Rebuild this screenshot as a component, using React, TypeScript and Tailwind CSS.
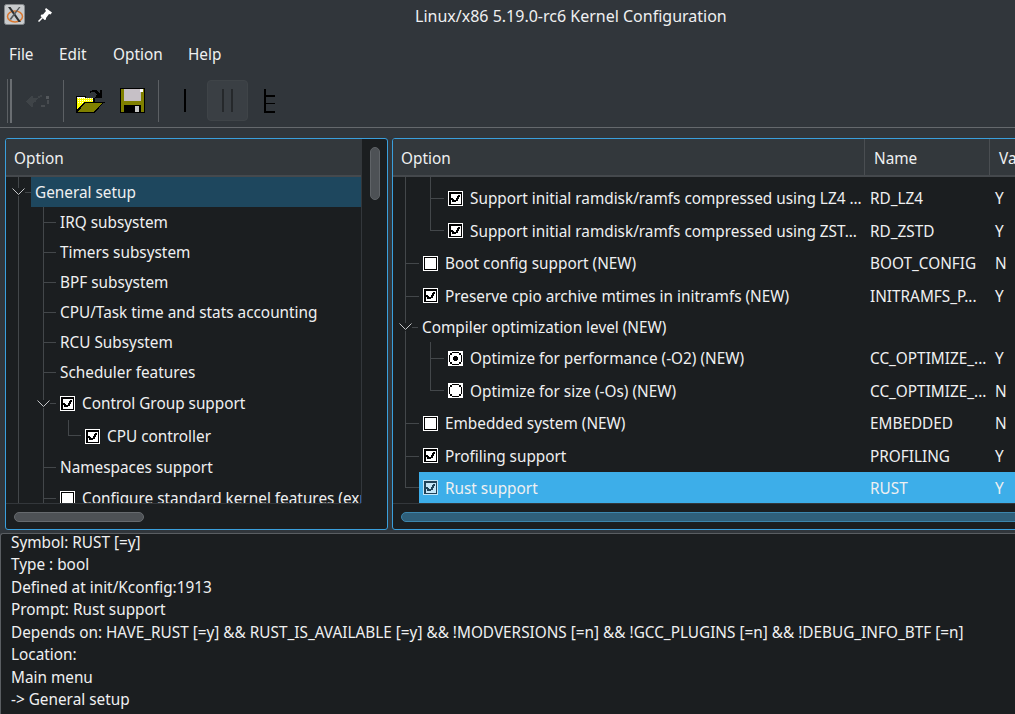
import React from "react";

type G = "v" | "t" | "l" | "c" | "n";

function Chevron() {
  return (
    <svg width="13" height="8" viewBox="0 0 13 8" className="block">
      <path d="M0.5 0.5 L6.5 6.5 L12.5 0.5" fill="none" stroke="#c4c6c8" strokeWidth="1" />
    </svg>
  );
}

function Guide({ g, wide }: { g: G; wide?: boolean }) {
  const w = wide ? "w-[26px]" : "w-[25px]";
  if (g === "n") return <div className={`${w} flex-none`} />;
  if (g === "v")
    return (
      <div className={`${w} flex-none pl-[12px]`}>
        <div className="h-full w-px bg-[#43474a]" />
      </div>
    );
  if (g === "l")
    return (
      <div className={`${w} flex-none pl-[12px]`}>
        <div className="h-1/2 border-b border-l border-[#43474a]" />
      </div>
    );
  return (
    <div className={`${w} flex-none pl-[12px] relative`}>
      <div className="h-full border-l border-[#43474a] flex items-center">
        <div className="h-px w-full bg-[#43474a]" />
      </div>
      {g === "c" && (
        <div className="absolute left-[6px] top-1/2 -translate-y-1/2 bg-[#1b1e20] h-[8px] flex">
          <Chevron />
        </div>
      )}
    </div>
  );
}

function Check({ on, sel }: { on: boolean; sel?: boolean }) {
  const bg = sel ? "#c4e6f8" : "#ffffff";
  const ink = sel ? "#1f4258" : "#000000";
  return (
    <svg width="15" height="15" viewBox="0 0 15 15" className="flex-none block" shapeRendering="crispEdges">
      <rect width="15" height="15" fill={bg} />
      <rect x="1" y="1" width="13" height="13" fill={ink} />
      <rect x="2" y="2" width="11" height="11" fill={bg} />
      {on && (
        <g fill={ink}>
          <rect x="1" y="1" width="13" height="2" />
          <rect x="1" y="1" width="2" height="13" />
          <rect x="3" y="7" width="2" height="1" />
          <rect x="3" y="8" width="3" height="1" />
          <rect x="4" y="9" width="6" height="1" />
          <rect x="4" y="10" width="4" height="1" />
          <rect x="8" y="7" width="2" height="2" />
          <rect x="9" y="5" width="2" height="3" />
          <rect x="10" y="4" width="2" height="2" />
        </g>
      )}
    </svg>
  );
}

function Radio({ on }: { on: boolean }) {
  return (
    <svg width="15" height="15" viewBox="0 0 15 15" className="flex-none block" shapeRendering="crispEdges">
      <rect width="15" height="15" fill="#ffffff" />
      <g fill="#000000">
        <rect x="4" y="1" width="7" height="1" />
        <rect x="4" y="13" width="7" height="1" />
        <rect x="1" y="4" width="1" height="7" />
        <rect x="13" y="4" width="1" height="7" />
        <rect x="2" y="2" width="2" height="2" />
        <rect x="11" y="2" width="2" height="2" />
        <rect x="2" y="11" width="2" height="2" />
        <rect x="11" y="11" width="2" height="2" />
        {on && <rect x="6" y="5" width="3" height="5" />}
        {on && <rect x="5" y="6" width="5" height="3" />}
      </g>
    </svg>
  );
}

type Mark = "on" | "off" | "r1" | "r0" | undefined;

function MarkIcon({ m, sel }: { m: Mark; sel?: boolean }) {
  if (!m) return null;
  if (m === "on") return <Check on sel={sel} />;
  if (m === "off") return <Check on={false} />;
  return <Radio on={m === "r1"} />;
}

function LeftRow({
  guides,
  label,
  mark,
  h,
  sel,
}: {
  guides: G[];
  label: string;
  mark?: Mark;
  h: string;
  sel?: boolean;
}) {
  return (
    <div className={`flex flex-none ${h}`}>
      {guides.map((g, i) => (
        <Guide key={i} g={g} />
      ))}
      <div className={`flex flex-1 items-center whitespace-nowrap min-w-0 overflow-hidden pl-[4px] ${sel ? "bg-[#1e475e]" : ""}`}>
        {mark && (
          <div className="mr-[7px]">
            <MarkIcon m={mark} />
          </div>
        )}
        <span>{label}</span>
      </div>
    </div>
  );
}

function RightRow({
  guides,
  label,
  name,
  val,
  mark,
  h,
  sel,
}: {
  guides: G[];
  label: string;
  name?: string;
  val?: string;
  mark?: Mark;
  h: string;
  sel?: boolean;
}) {
  return (
    <div className={`flex flex-none ${h}`}>
      {guides.map((g, i) => (
        <Guide key={i} g={g} wide={i === guides.length - 1 && g !== "c"} />
      ))}
      <div className={`flex flex-1 items-center whitespace-nowrap min-w-0 ${sel ? "bg-[#3daee9] pt-[1px]" : ""}`}>
        <div className="flex flex-1 min-w-0 items-center pl-[4px]">
          {mark && (
            <div className="mr-[7px]">
              <MarkIcon m={mark} sel={sel} />
            </div>
          )}
          <span>{label}</span>
        </div>
        <div className="w-[125px] flex-none pl-[5px]">{name}</div>
        <div className="w-[56px] flex-none pl-[5px]">{val}</div>
      </div>
    </div>
  );
}

function Thumb({ className }: { className: string }) {
  return <div className={`rounded-full border ${className}`} />;
}

function Logo() {
  return (
    <svg width="21" height="21" viewBox="0 0 21 21" className="block flex-none">
      <rect x="0.5" y="0.5" width="20" height="20" rx="2" fill="#c8cbcd" stroke="#85898c" />
      <ellipse cx="11" cy="12.5" rx="7.5" ry="5.5" fill="none" stroke="#d9772f" strokeWidth="1.5" />
      <path d="M4 3 L6.5 3 L17 18 L14.5 18 Z" fill="#2e3133" />
      <path d="M15 3 L16.5 3 L7 16 L5.5 15 Z" fill="#55595c" />
    </svg>
  );
}

function Pin() {
  return (
    <svg width="14" height="14" viewBox="0 0 14 14" className="block flex-none">
      <path d="M8 0 L14 4.5 L12.5 6.5 L11 6 L8 10 L8 11.5 L6.5 12 L2.5 8 L3.5 6.5 L5 6.5 L8 3 L7 1.5 Z" fill="#ffffff" />
      <path d="M0.5 13.5 L4.5 9.5" stroke="#ffffff" strokeWidth="1.5" />
    </svg>
  );
}

function BackIcon() {
  return (
    <svg width="24" height="16" viewBox="0 0 24 16" className="block" shapeRendering="crispEdges">
      <path d="M0 8 L6 3 L7 3 L7 5 L12 5 L12 3 L16 2 L16 4 L12 5 L10 8 L9 9 L7 10 L7 14 L5 14 Z" fill="#3f4448" />
      <rect x="20" y="3" width="3" height="3" fill="#54585c" />
      <rect x="21" y="7" width="2" height="4" fill="#484c50" />
      <rect x="15" y="12" width="4" height="2" fill="#484c50" />
    </svg>
  );
}

function OpenIcon() {
  return (
    <svg width="29" height="25" viewBox="0 0 29 25" className="block" shapeRendering="crispEdges">
      <defs>
        <pattern id="dither" width="2" height="2" patternUnits="userSpaceOnUse">
          <rect width="2" height="2" fill="#ffff00" />
          <rect width="1" height="1" fill="#ffffff" />
        </pattern>
      </defs>
      <path d="M14 3 H16 V2 H21 V3 H22 V4 H23 V5 H24 V2 H26 V10 H19 V9 H20 V7 H21 V6 H20 V5 H19 V4 H15 V5 H14 Z" fill="#000" />
      <rect x="0" y="8" width="10" height="17" fill="#000" />
      <rect x="8" y="10" width="11" height="4" fill="#000" />
      <rect x="1" y="10" width="16" height="5" fill="url(#dither)" />
      <rect x="1" y="15" width="9" height="8" fill="#ffff00" />
      <rect x="1" y="9" width="8" height="1" fill="#fff" />
      <path d="M8 14 H29 V15 H27 L19 25 H0 V23 Z" fill="#000" />
      <path d="M9 15 H26 L18 24 H2 Z" fill="#808000" />
    </svg>
  );
}

function SaveIcon() {
  return (
    <svg width="25" height="25" viewBox="0 0 25 25" className="block" shapeRendering="crispEdges">
      <rect width="25" height="25" fill="#000" />
      <rect x="1" y="1" width="23" height="23" fill="#808000" />
      <rect x="4" y="1" width="17" height="12" fill="#c6c0c6" />
      <rect x="20" y="1" width="3" height="3" fill="#ffffff" />
      <rect x="4" y="17" width="17" height="8" fill="#000" />
      <rect x="15" y="18" width="4" height="6" fill="#c6c6c6" />
    </svg>
  );
}

function Separator() {
  return <div className="w-px h-[42px] bg-[#5c6064] flex-none" />;
}

function SingleIcon() {
  return <div className="w-[2px] h-[23px] bg-black flex-none" />;
}

function SplitIcon() {
  return (
    <div className="w-[41px] h-[41px] rounded-[4px] bg-[#3a3f44] border border-[#3f4448] flex items-center justify-center gap-[7px] flex-none">
      <div className="w-[2px] h-[23px] bg-[#25282b]" />
      <div className="w-[2px] h-[23px] bg-[#25282b]" />
    </div>
  );
}

function FullIcon() {
  return (
    <svg width="11" height="24" viewBox="0 0 11 24" className="block flex-none" shapeRendering="crispEdges">
      <rect x="0" y="0" width="2" height="24" fill="#000" />
      <rect x="0" y="6" width="11" height="2" fill="#000" />
      <rect x="0" y="14" width="11" height="1" fill="#000" />
      <rect x="0" y="22" width="11" height="2" fill="#000" />
    </svg>
  );
}

const infoLines = [
  "Symbol: RUST [=y]",
  "Type : bool",
  "Defined at init/Kconfig:1913",
  "Prompt: Rust support",
  "Depends on: HAVE_RUST [=y] && RUST_IS_AVAILABLE [=y] && !MODVERSIONS [=n] && !GCC_PLUGINS [=n] && !DEBUG_INFO_BTF [=n]",
  "Location:",
  "Main menu",
  "-> General setup",
];

export default function App() {
  return (
    <div className="w-[1015px] h-[714px] overflow-hidden bg-[#31363b] text-[#eff0f1] font-['Noto_Sans',sans-serif] text-[15.33px] flex flex-col">
      {/* title bar */}
      <div className="h-[33px] flex-none flex items-center pl-[4px] pb-[4px]">
        <Logo />
        <div className="ml-[13px]">
          <Pin />
        </div>
        <div className="ml-[363px] mt-[3px] whitespace-nowrap text-[16px]">Linux/x86 5.19.0-rc6 Kernel Configuration</div>
      </div>

      {/* menu */}
      <div className="h-[41px] flex-none flex items-center pl-[9px] pt-[2px]">
        <span className="w-[50px]">File</span>
        <span className="w-[54px]">Edit</span>
        <span className="w-[75px]">Option</span>
        <span>Help</span>
      </div>

      {/* toolbar */}
      <div className="h-[54px] flex-none flex items-center border-b border-[#65696d]">
        <div className="w-px h-[44px] bg-[#5c6064] ml-[7px]" />
        <div className="w-[2px] h-[44px] bg-[#6a6e72] ml-[2px]" />
        <div className="ml-[14px]">
          <BackIcon />
        </div>
        <div className="ml-[13px]">
          <Separator />
        </div>
        <div className="ml-[12px]">
          <OpenIcon />
        </div>
        <div className="ml-[15px]">
          <SaveIcon />
        </div>
        <div className="ml-[13px]">
          <Separator />
        </div>
        <div className="ml-[25px]">
          <SingleIcon />
        </div>
        <div className="ml-[21px]">
          <SplitIcon />
        </div>
        <div className="ml-[16px]">
          <FullIcon />
        </div>
      </div>

      {/* panels */}
      <div className="flex flex-none h-[392px] mt-[10px] pl-[5px] gap-[4px]">
        {/* left */}
        <div className="w-[383px] flex-none border border-[#3a9fdc] rounded-[3px] bg-[#1b1e20] flex flex-col overflow-hidden">
          <div className="flex h-[364px] flex-none">
            <div className="w-[356px] flex-none flex flex-col border-r border-[#33373b] overflow-hidden">
              <div className="h-[38px] flex-none bg-[#33383c] border-b-2 border-[#45494d] flex items-center pl-[8px] pt-[2px]">Option</div>
              <LeftRow guides={["c"]} label="General setup" h="h-[30px]" sel />
              <LeftRow guides={["v", "t"]} label="IRQ subsystem" h="h-[30px]" />
              <LeftRow guides={["v", "t"]} label="Timers subsystem" h="h-[30px]" />
              <LeftRow guides={["v", "t"]} label="BPF subsystem" h="h-[30px]" />
              <LeftRow guides={["v", "t"]} label="CPU/Task time and stats accounting" h="h-[30px]" />
              <LeftRow guides={["v", "t"]} label="RCU Subsystem" h="h-[30px]" />
              <LeftRow guides={["v", "t"]} label="Scheduler features" h="h-[30px]" />
              <LeftRow guides={["v", "c"]} label="Control Group support" mark="on" h="h-[33px]" />
              <LeftRow guides={["v", "v", "l"]} label="CPU controller" mark="on" h="h-[32px]" />
              <LeftRow guides={["v", "t"]} label="Namespaces support" h="h-[30px]" />
              <LeftRow guides={["v", "t"]} label="Configure standard kernel features (expert users)" mark="off" h="h-[32px]" />
            </div>
            <div className="flex-1 pl-[8px] pt-[8px]">
              <Thumb className="w-[10px] h-[53px] bg-[#4d5155] border-[#5f6367]" />
            </div>
          </div>
          <div className="flex-1 border-t border-[#33373b] pl-[8px] pt-[8px] mr-[26px]">
            <Thumb className="w-[130px] h-[10px] bg-[#4d5155] border-[#666a6e]" />
          </div>
        </div>

        {/* right */}
        <div className="w-[655px] flex-none border border-[#3a9fdc] rounded-[3px] bg-[#1b1e20] flex flex-col overflow-hidden">
          <div className="h-[364px] flex-none flex flex-col overflow-hidden">
            <div className="h-[38px] flex-none bg-[#33383c] border-b-2 border-[#45494d] flex">
              <div className="w-[472px] flex-none border-r border-[#4a4e52] flex items-center pl-[8px] pt-[2px]">Option</div>
              <div className="w-[125px] flex-none border-r border-[#4a4e52] flex items-center pl-[9px] pt-[2px]">Name</div>
              <div className="flex-1 flex items-center pl-[9px] pt-[2px]">Value</div>
            </div>
            <RightRow guides={["v", "v"]} label="" h="h-[5px]" />
            <RightRow guides={["v", "t"]} label="Support initial ramdisk/ramfs compressed using LZ4 ..." name="RD_LZ4" val="Y" mark="on" h="h-[33px]" />
            <RightRow guides={["v", "l"]} label="Support initial ramdisk/ramfs compressed using ZST..." name="RD_ZSTD" val="Y" mark="on" h="h-[32px]" />
            <RightRow guides={["t"]} label="Boot config support (NEW)" name="BOOT_CONFIG" val="N" mark="off" h="h-[33px]" />
            <RightRow guides={["t"]} label="Preserve cpio archive mtimes in initramfs (NEW)" name="INITRAMFS_P..." val="Y" mark="on" h="h-[32px]" />
            <RightRow guides={["c"]} label="Compiler optimization level (NEW)" h="h-[30px]" />
            <RightRow guides={["v", "t"]} label="Optimize for performance (-O2) (NEW)" name="CC_OPTIMIZE_..." val="Y" mark="r1" h="h-[33px]" />
            <RightRow guides={["v", "l"]} label="Optimize for size (-Os) (NEW)" name="CC_OPTIMIZE_..." val="N" mark="r0" h="h-[32px]" />
            <RightRow guides={["t"]} label="Embedded system (NEW)" name="EMBEDDED" val="N" mark="off" h="h-[33px]" />
            <RightRow guides={["t"]} label="Profiling support" name="PROFILING" val="Y" mark="on" h="h-[32px]" />
            <RightRow guides={["l"]} label="Rust support" name="RUST" val="Y" mark="on" h="h-[31px]" sel />
          </div>
          <div className="flex-1 border-t border-[#33373b] pl-[8px] pt-[8px]">
            <Thumb className="w-[700px] h-[10px] bg-[#2f5f7a] border-[#3c86ad]" />
          </div>
        </div>
      </div>

      {/* info */}
      <div className="mt-[3px] flex-1 bg-[#1b1e20] border-t border-l border-[#5a5e62] rounded-tl-[3px] pl-[10px] leading-[22.5px] whitespace-nowrap overflow-hidden">
        <div className="-mt-[3.25px]">
          {infoLines.map((l) => (
            <div key={l}>{l}</div>
          ))}
        </div>
      </div>
    </div>
  );
}
